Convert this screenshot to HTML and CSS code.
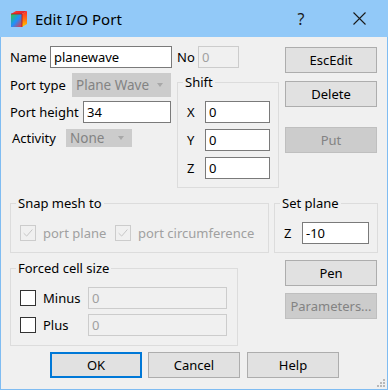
FILE: index.html
```html
<!DOCTYPE html>
<html>
<head>
<meta charset="utf-8">
<link rel="stylesheet" href="styles.css">
</head>
<body>
<div class="window">
  <div class="titlebar">
    <svg class="appicon" viewBox="0 0 18 18" width="18" height="18">
      <defs>
        <linearGradient id="gl" x1="0" y1="0" x2="1" y2="1">
          <stop offset="0" stop-color="#2ecc40"/>
          <stop offset="0.5" stop-color="#1f8fff"/>
          <stop offset="1" stop-color="#ff3030"/>
        </linearGradient>
        <linearGradient id="gr" x1="0" y1="0" x2="0" y2="1">
          <stop offset="0" stop-color="#ff2a2a"/>
          <stop offset="0.6" stop-color="#ff7a10"/>
          <stop offset="1" stop-color="#ffd000"/>
        </linearGradient>
        <linearGradient id="gt" x1="0" y1="0" x2="1" y2="0">
          <stop offset="0" stop-color="#ff3b2f"/>
          <stop offset="1" stop-color="#e0202a"/>
        </linearGradient>
      </defs>
      <polygon points="1,4 6,1 17,1 12,4" fill="url(#gt)"/>
      <polygon points="1,4 12,4 12,17 1,17" fill="url(#gl)"/>
      <polygon points="12,4 17,1 17,14 12,17" fill="url(#gr)"/>
      <polyline points="1,4 12,4 12,17" fill="none" stroke="#b01818" stroke-width="0.8"/>
    </svg>
    <span class="title">Edit I/O Port</span>
    <span class="spacer"></span>
    <span class="tbbtn help">?</span>
    <span class="tbbtn close">
      <svg viewBox="0 0 13 13" width="13" height="13"><path d="M0.5 0.5 L12.5 12.5 M12.5 0.5 L0.5 12.5" stroke="#1a1a1a" stroke-width="1.1" fill="none"/></svg>
    </span>
  </div>
  <div class="body">
    <div class="top">
      <div class="top-left">
        <div class="row row-name">
          <span class="lbl w-name">Name</span>
          <div class="edit w-nameinput">planewave</div>
          <span class="lbl w-no">No</span>
          <div class="edit disabled w-noinput">0</div>
        </div>
        <div class="top-sub">
          <div class="props">
            <div class="row r-ptype">
              <span class="lbl w-ptype">Port type</span>
              <div class="combo w-ptcombo">Plane Wave<span class="arrow"></span></div>
            </div>
            <div class="row r-pheight">
              <span class="lbl w-pheight">Port height</span>
              <div class="edit w-phinput">34</div>
            </div>
            <div class="row r-act">
              <span class="lbl w-act">Activity</span>
              <div class="combo w-actcombo">None<span class="arrow"></span></div>
            </div>
          </div>
          <fieldset class="group shift">
            <legend>Shift</legend>
            <div class="row xyz"><span class="lbl w-axis">X</span><div class="edit w-axisinput">0</div></div>
            <div class="row xyz"><span class="lbl w-axis">Y</span><div class="edit w-axisinput">0</div></div>
            <div class="row xyz"><span class="lbl w-axis">Z</span><div class="edit w-axisinput">0</div></div>
          </fieldset>
        </div>
      </div>
      <div class="btncol">
        <div class="btn b-esc">EscEdit</div>
        <div class="btn b-del">Delete</div>
        <div class="btn disabled b-put">Put</div>
      </div>
    </div>

    <div class="mid">
      <fieldset class="group snap">
        <legend>Snap mesh to</legend>
        <div class="row chkrow">
          <div class="chkitem first">
            <span class="chk disabled"><svg viewBox="0 0 16 16" width="14" height="14"><path d="M3 8.2 L6.5 11.5 L13 4" stroke="#c5c5c5" stroke-width="1.1" fill="none"/></svg></span>
            <span class="chklbl disabled-text">port plane</span>
          </div>
          <div class="chkitem">
            <span class="chk disabled"><svg viewBox="0 0 16 16" width="14" height="14"><path d="M3 8.2 L6.5 11.5 L13 4" stroke="#c5c5c5" stroke-width="1.1" fill="none"/></svg></span>
            <span class="chklbl disabled-text">port circumference</span>
          </div>
        </div>
      </fieldset>
      <fieldset class="group setplane">
        <legend>Set plane</legend>
        <div class="row"><span class="lbl w-axis">Z</span><div class="edit w-spinput">-10</div></div>
      </fieldset>
    </div>

    <div class="lower">
      <fieldset class="group forced">
        <legend>Forced cell size</legend>
        <div class="row frow">
          <span class="chk"></span>
          <span class="chklbl w-fl">Minus</span>
          <div class="edit disabled w-finput">0</div>
        </div>
        <div class="row frow">
          <span class="chk"></span>
          <span class="chklbl w-fl">Plus</span>
          <div class="edit disabled w-finput">0</div>
        </div>
      </fieldset>
      <div class="btncol lowercol">
        <div class="btn b-pen">Pen</div>
        <div class="btn disabled b-par">Parameters...</div>
      </div>
    </div>

    <div class="bottom">
      <div class="btn default b-ok">OK</div>
      <div class="btn b-cancel">Cancel</div>
      <div class="btn b-help">Help</div>
    </div>

    <div class="grip">
      <span></span><span></span><span></span><span></span><span></span><span></span>
    </div>
  </div>
</div>
</body>
</html>
```

FILE: styles.css
```css
* { box-sizing: border-box; }
html, body { margin: 0; padding: 0; }
body {
  width: 388px;
  height: 390px;
  font-family: "Segoe UI", "Noto Sans", "Open Sans", sans-serif;
  font-size: 13px;
  color: #000;
  background: #f0f0f0;
}
.window {
  width: 388px;
  height: 390px;
  display: flex;
  flex-direction: column;
}
.titlebar {
  height: 37px;
  flex: none;
  background: #92c9f8;
  display: flex;
  align-items: center;
}
.appicon { margin-left: 10px; flex: none; }
.title { margin-left: 7px; font-size: 15px; color: #000; }
.spacer { flex: 1; }
.tbbtn {
  width: 58px;
  height: 37px;
  display: flex;
  align-items: center;
  justify-content: center;
}
.help { font-size: 16px; color: #1a1a1a; }
.close svg { display: block; }

.body {
  flex: 1;
  position: relative;
  background: #f0f0f0;
  border: 1px solid #7fbcf2;
  border-top: 0;
  padding: 9px 0 0 9px;
}
.row { display: flex; align-items: center; }
.lbl { flex: none; white-space: nowrap; }
.edit {
  flex: none;
  height: 22px;
  background: #fff;
  border: 1px solid #7a7a7a;
  padding-left: 3px;
  line-height: 20px;
  white-space: nowrap;
  overflow: hidden;
}
.edit.disabled {
  background: #f0f0f0;
  border-color: #cccccc;
  color: #a0a0a0;
}
.combo {
  flex: none;
  position: relative;
  background: #cccccc;
  border: 1px solid #cccccc;
  color: #838383;
  padding-left: 3px;
  white-space: nowrap;
  font-size: 13.5px;
}
.combo .arrow {
  position: absolute;
  right: 7px;
  top: 50%;
  margin-top: -2px;
  width: 0; height: 0;
  border-left: 3.5px solid transparent;
  border-right: 3.5px solid transparent;
  border-top: 4px solid #a8a8a8;
}

/* top block */
.top { display: flex; }
.top-left { width: 269px; flex: none; }
.row-name { height: 22px; }
.w-name { width: 40px; }
.w-nameinput { width: 122px; }
.w-no { width: 21px; margin-left: 5px; }
.w-noinput { width: 41px; }
.top-sub { display: flex; margin-top: 5px; }
.props { width: 162px; flex: none; }
.r-ptype { height: 24px; }
.w-ptype { width: 62px; }
.w-ptcombo { width: 99px; height: 24px; line-height: 22px; }
.r-pheight { height: 22px; margin-top: 4px; }
.w-pheight { width: 73px; }
.w-phinput { width: 88px; }
.r-act { height: 18px; margin-top: 6px; }
.w-act { width: 56px; padding-left: 2px; }
.w-actcombo { width: 66px; height: 18px; line-height: 16px; }

.group {
  margin: 0;
  border: 1px solid #dcdcdc;
  padding: 11px 0 0 9px;
  min-width: 0;
}
.group legend {
  padding: 0 2px;
  margin-left: -4px;
  line-height: 16px;
  height: 16px;
}
.shift {
  width: 103px;
  height: 114px;
  margin-left: 5px;
  margin-top: 1px;
}
.xyz { height: 22px; }
.xyz + .xyz { margin-top: 6px; }
.w-axis { width: 18px; }
.w-axisinput { width: 65px; }

.btncol {
  width: 92px;
  flex: none;
  margin-left: 6px;
  display: flex;
  flex-direction: column;
}
.btn {
  height: 26px;
  background: #e1e1e1;
  border: 1px solid #adadad;
  text-align: center;
  line-height: 24px;
  white-space: nowrap;
}
.btn.disabled {
  background: #cccccc;
  border-color: #bfbfbf;
  color: #838383;
}
.btn.default {
  border: 2px solid #0078d7;
  line-height: 22px;
}
.b-esc { margin-top: 1px; }
.b-del { margin-top: 8px; }
.b-put { margin-top: 20px; }

/* snap row */
.mid { display: flex; margin-top: 7px; }
.snap { width: 259px; height: 58px; }
.setplane { width: 104px; height: 58px; margin-left: 5px; }
.chkrow { height: 22px; }
.chkitem { display: flex; align-items: center; flex: none; }
.chkitem.first { width: 95px; }
.chk {
  flex: none;
  width: 16px;
  height: 16px;
  border: 1px solid #333333;
  background: #fff;
  display: flex;
  align-items: center;
  justify-content: center;
}
.chk.disabled { border-color: #cccccc; background: #f0f0f0; }
.chklbl { margin-left: 7px; white-space: nowrap; }
.disabled-text { color: #a0a0a0; }
.w-spinput { width: 67px; }

/* forced row */
.lower { display: flex; margin-top: 6px; }
.forced { width: 228px; height: 86px; margin-top: 1px; }
.frow { height: 22px; }
.frow + .frow { margin-top: 5px; }
.w-fl { width: 45px; }
.w-finput { width: 139px; }
.lowercol { margin-left: 47px; }
.b-pen { margin-top: 1px; }
.b-par { margin-top: 7px; }

/* bottom */
.bottom { display: flex; margin-top: 6px; padding-left: 40px; }
.bottom .btn { width: 92px; }
.b-cancel { margin-left: 6px; }
.b-help { margin-left: 7px; }

.grip {
  position: absolute;
  right: 2px;
  bottom: 2px;
  width: 9px;
  height: 9px;
}
.grip span {
  position: absolute;
  width: 2px;
  height: 2px;
  background: #b8b8b8;
}
.grip span:nth-child(1) { right: 0; bottom: 0; }
.grip span:nth-child(2) { right: 3px; bottom: 0; }
.grip span:nth-child(3) { right: 6px; bottom: 0; }
.grip span:nth-child(4) { right: 0; bottom: 3px; }
.grip span:nth-child(5) { right: 3px; bottom: 3px; }
.grip span:nth-child(6) { right: 0; bottom: 6px; }
```
